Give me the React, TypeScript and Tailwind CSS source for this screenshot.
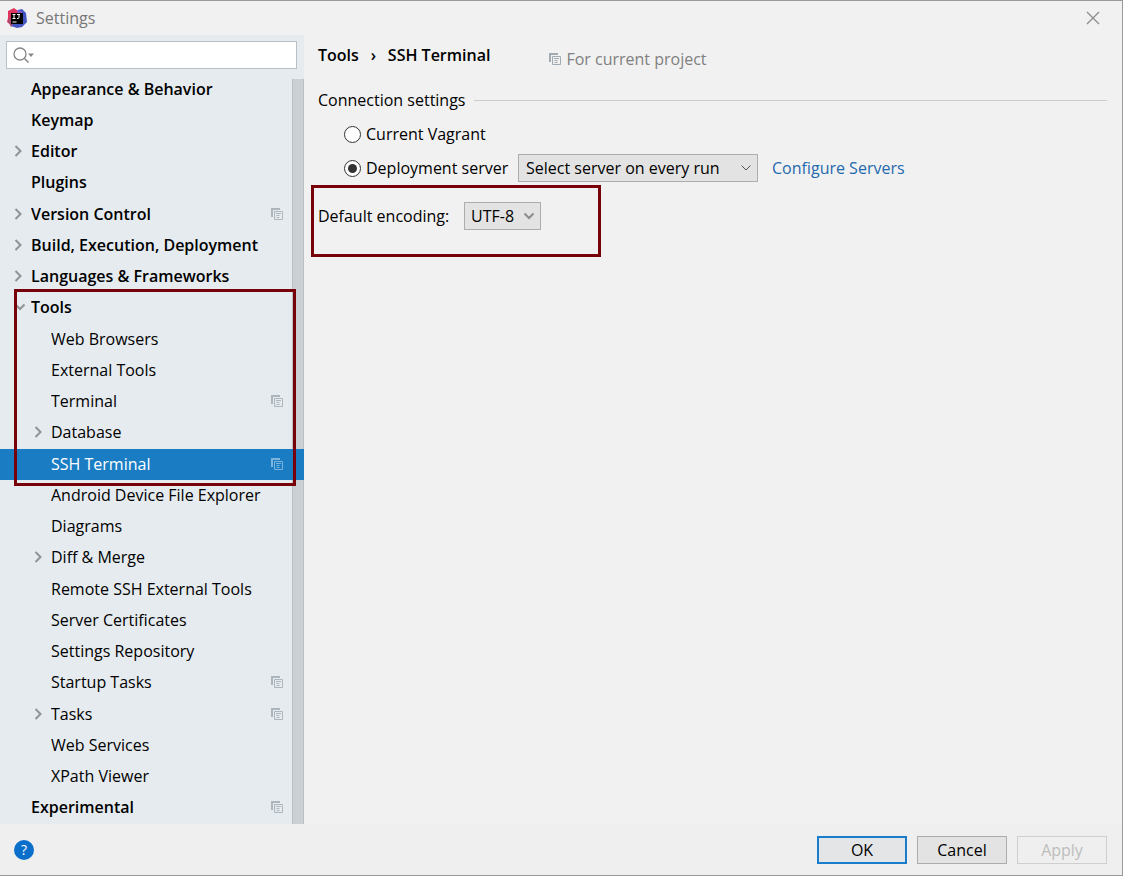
import { useState } from 'react'
import { clsx } from 'clsx'

interface TreeItem {
  label: string
  level: 0 | 1
  arrow?: 'right' | 'down'
  project?: boolean
}

const items: TreeItem[] = [
  { label: 'Appearance & Behavior', level: 0 },
  { label: 'Keymap', level: 0 },
  { label: 'Editor', level: 0, arrow: 'right' },
  { label: 'Plugins', level: 0 },
  { label: 'Version Control', level: 0, arrow: 'right', project: true },
  { label: 'Build, Execution, Deployment', level: 0, arrow: 'right' },
  { label: 'Languages & Frameworks', level: 0, arrow: 'right' },
  { label: 'Tools', level: 0, arrow: 'down' },
  { label: 'Web Browsers', level: 1 },
  { label: 'External Tools', level: 1 },
  { label: 'Terminal', level: 1, project: true },
  { label: 'Database', level: 1, arrow: 'right' },
  { label: 'SSH Terminal', level: 1, project: true },
  { label: 'Android Device File Explorer', level: 1 },
  { label: 'Diagrams', level: 1 },
  { label: 'Diff & Merge', level: 1, arrow: 'right' },
  { label: 'Remote SSH External Tools', level: 1 },
  { label: 'Server Certificates', level: 1 },
  { label: 'Settings Repository', level: 1 },
  { label: 'Startup Tasks', level: 1, project: true },
  { label: 'Tasks', level: 1, arrow: 'right', project: true },
  { label: 'Web Services', level: 1 },
  { label: 'XPath Viewer', level: 1 },
  { label: 'Experimental', level: 0, project: true },
]

function LogoIcon() {
  return (
    <svg width="20" height="20" viewBox="0 0 20 20" aria-hidden="true">
      <path d="M1 3 7 0l4 3-1 9-5 6-5-4 1-4z" fill="#e0355f" />
      <path d="M1 13l4-6 2 9-3 3z" fill="#a8486e" />
      <path d="M11 2 15 1l4 4 1 9-5 5-5 1-6-2 7-7z" fill="#4356c4" />
      <path d="M10 2l4 1 2 3-5 3z" fill="#8a5bc8" />
      <rect x="4" y="5" width="12" height="11" fill="#000" />
      <path d="M5.500 6.500h3M7 6.500v4M5.500 10.500h3M10 6.500h3M12 6.500v3q0 1-1 1h-1M5.500 14h4" stroke="#fff" strokeWidth="1" fill="none" />
    </svg>
  )
}

function ProjectIcon({ className }: { className?: string }) {
  return (
    <svg width="12" height="12" viewBox="0 0 12 12" fill="none" stroke="currentColor" className={className} aria-hidden="true">
      <path d="M0 0h9v2H2v7H0z" fill="currentColor" stroke="none" />
      <path d="M3.500 3.500h8v8h-8zM5 5.500h5M5.500 7.500h3M5.500 9.500h3" />
    </svg>
  )
}

function Chevron({ direction, className }: { direction: 'right' | 'down'; className?: string }) {
  return (
    <svg width="12" height="12" viewBox="0 0 12 12" fill="none" stroke="currentColor" strokeWidth="2" className={className} aria-hidden="true">
      <path d={direction === 'right' ? 'M3.500 1 8.500 6l-5 5' : 'M1.500 3.500 6 8l4.500-4.500'} />
    </svg>
  )
}

function TreeRow({ item, selected, onSelect }: { item: TreeItem; selected: boolean; onSelect: () => void }) {
  return (
    <li className="flex">
      <button
        type="button"
        onClick={onSelect}
        className={clsx(
          'flex w-full items-center pr-[21px] pb-[2px] text-left',
          item.level === 0 ? 'pl-3 font-semibold' : 'pl-8',
          selected ? 'bg-[#1a7dc4] text-white' : 'text-black',
        )}
      >
        <span className="w-[19px] shrink-0">
          {item.arrow && (
            <Chevron direction={item.arrow} className={clsx('text-[#8f9396]', item.arrow === 'down' && 'ml-[2px]')} />
          )}
        </span>
        <span className="flex-1 truncate">{item.label}</span>
        {item.project && <ProjectIcon className={selected ? 'text-[#7db4dd]' : 'text-[#adb5bd]'} />}
      </button>
    </li>
  )
}

function Sidebar() {
  const [selected, setSelected] = useState('SSH Terminal')

  return (
    <aside className="flex w-[304px] shrink-0 flex-col bg-[#e6ebef]">
      <label className="mx-[6px] mt-[6px] mr-[7px] flex h-7 items-center border border-[#b5c0c9] bg-white px-[6px]">
        <svg width="22" height="18" viewBox="0 0 22 18" fill="none" stroke="#878787" strokeWidth="1.300" aria-hidden="true">
          <circle cx="7" cy="8" r="6" />
          <path d="m11.500 12.500 4 4" strokeWidth="1.600" />
          <path d="M15 7.500h6L18 11z" fill="#878787" stroke="none" />
        </svg>
        <input type="text" aria-label="Search settings" className="min-w-0 flex-1 outline-none" />
      </label>
      <div className="relative mt-[5px] flex flex-1 flex-col">
        <div className="absolute top-[5px] right-0 bottom-0 w-3 border-x border-[#b9bfc4] bg-[#cbd0d4]" />
        <ul className="relative grid flex-1 auto-rows-fr">
          {items.map((item) => (
            <TreeRow
              key={item.label}
              item={item}
              selected={item.label === selected}
              onSelect={() => setSelected(item.label)}
            />
          ))}
        </ul>
        <div className="pointer-events-none absolute top-[215px] right-2 left-[14px] h-[197px] border-3 border-[#780008]" />
      </div>
    </aside>
  )
}

const radioClass =
  'grid size-[17px] appearance-none place-items-center rounded-full border border-[#333] bg-white checked:before:size-[9px] checked:before:rounded-full checked:before:bg-[#333]'

function TerminalSettings() {
  const [target, setTarget] = useState('server')

  return (
    <main className="min-w-0 flex-1 pr-[15px] pl-[7px]">
      <div className="flex items-center pt-1 pl-[7px]">
        <h1 className="flex font-semibold">
          <span>Tools</span>
          <span className="w-[29px] text-center">›</span>
          <span>SSH Terminal</span>
        </h1>
        <p className="ml-[59px] flex items-center gap-[5px] pt-2 text-[#808080]">
          <ProjectIcon className="text-[#a3abb2]" />
          For current project
        </p>
      </div>

      <div role="group" aria-labelledby="connection" className="pl-[7px]">
        <div className="mt-[17px] flex items-center gap-2">
          <h2 id="connection">Connection settings</h2>
          <span className="h-px flex-1 bg-[#cdcdcd]" />
        </div>
        <div className="mt-[10px] pl-[26px]">
          <label className="flex w-fit items-center gap-[5px]">
            <input type="radio" name="target" className={radioClass} checked={target === 'vagrant'} onChange={() => setTarget('vagrant')} />
            Current Vagrant
          </label>
          <div className="mt-2 flex items-center">
            <label className="flex w-[174px] items-center gap-[5px] whitespace-nowrap">
              <input type="radio" name="target" className={radioClass} checked={target === 'server'} onChange={() => setTarget('server')} />
              Deployment server
            </label>
            <div className="relative flex w-[240px] items-center">
              <select aria-label="Deployment server" className="h-7 w-full appearance-none border border-[#adadad] bg-[#e3e3e3] pl-[7px]">
                <option>Select server on every run</option>
              </select>
              <Chevron direction="down" className="pointer-events-none absolute right-[6px] stroke-1 text-[#555]" />
            </div>
            <a href="#servers" className="ml-[14px] text-[#1f69ad]">Configure Servers</a>
          </div>
        </div>
      </div>

      <div className="mt-[3px] flex h-[72px] w-[290px] items-start border-3 border-[#780008] pt-[14px] pl-1">
        <label htmlFor="encoding" className="w-[146px] leading-7">Default encoding:</label>
        <div className="relative flex w-[77px] items-center">
          <select id="encoding" className="h-7 w-full appearance-none border border-[#adadad] bg-[#e3e3e3] pl-[6px]">
            <option>UTF-8</option>
          </select>
          <Chevron direction="down" className="pointer-events-none absolute right-[6px] text-[#8c8c8c]" />
        </div>
      </div>
    </main>
  )
}

export default function App() {
  return (
    <div className="flex min-h-screen flex-col border-t border-r border-b border-[#999] bg-[#f1f1f1] font-['Open_Sans','Noto_Sans_CJK_SC',sans-serif] text-base leading-6 text-black">
      <header className="flex h-[34px] items-center px-[7px] text-[#777]">
        <LogoIcon />
        <span className="ml-[9px] flex-1">Settings</span>
        <button type="button" aria-label="Close" className="mr-[15px]">
          <svg width="14" height="14" viewBox="0 0 14 14" stroke="#8c8c8c" strokeWidth="1.300">
            <path d="m1 1 12 12M13 1 1 13" />
          </svg>
        </button>
      </header>

      <div className="flex flex-1">
        <Sidebar />
        <TerminalSettings />
      </div>

      <footer className="flex h-[51px] items-center gap-[10px] bg-[#efefef] pr-[15px] pl-[14px]">
        <button type="button" aria-label="Help" className="mr-auto size-5 rounded-full bg-[#0a6fcb] text-center text-sm leading-5 text-white">
          ?
        </button>
        <button type="button" className="h-7 w-[90px] border-2 border-[#1a7dcc] bg-[#e3e5e7] leading-6">OK</button>
        <button type="button" className="h-7 w-[90px] border border-[#adadad] bg-[#e3e3e3]">Cancel</button>
        <button type="button" disabled className="h-7 w-[90px] border border-[#cfcfcf] text-[#bdbdbd]">Apply</button>
      </footer>
    </div>
  )
}
